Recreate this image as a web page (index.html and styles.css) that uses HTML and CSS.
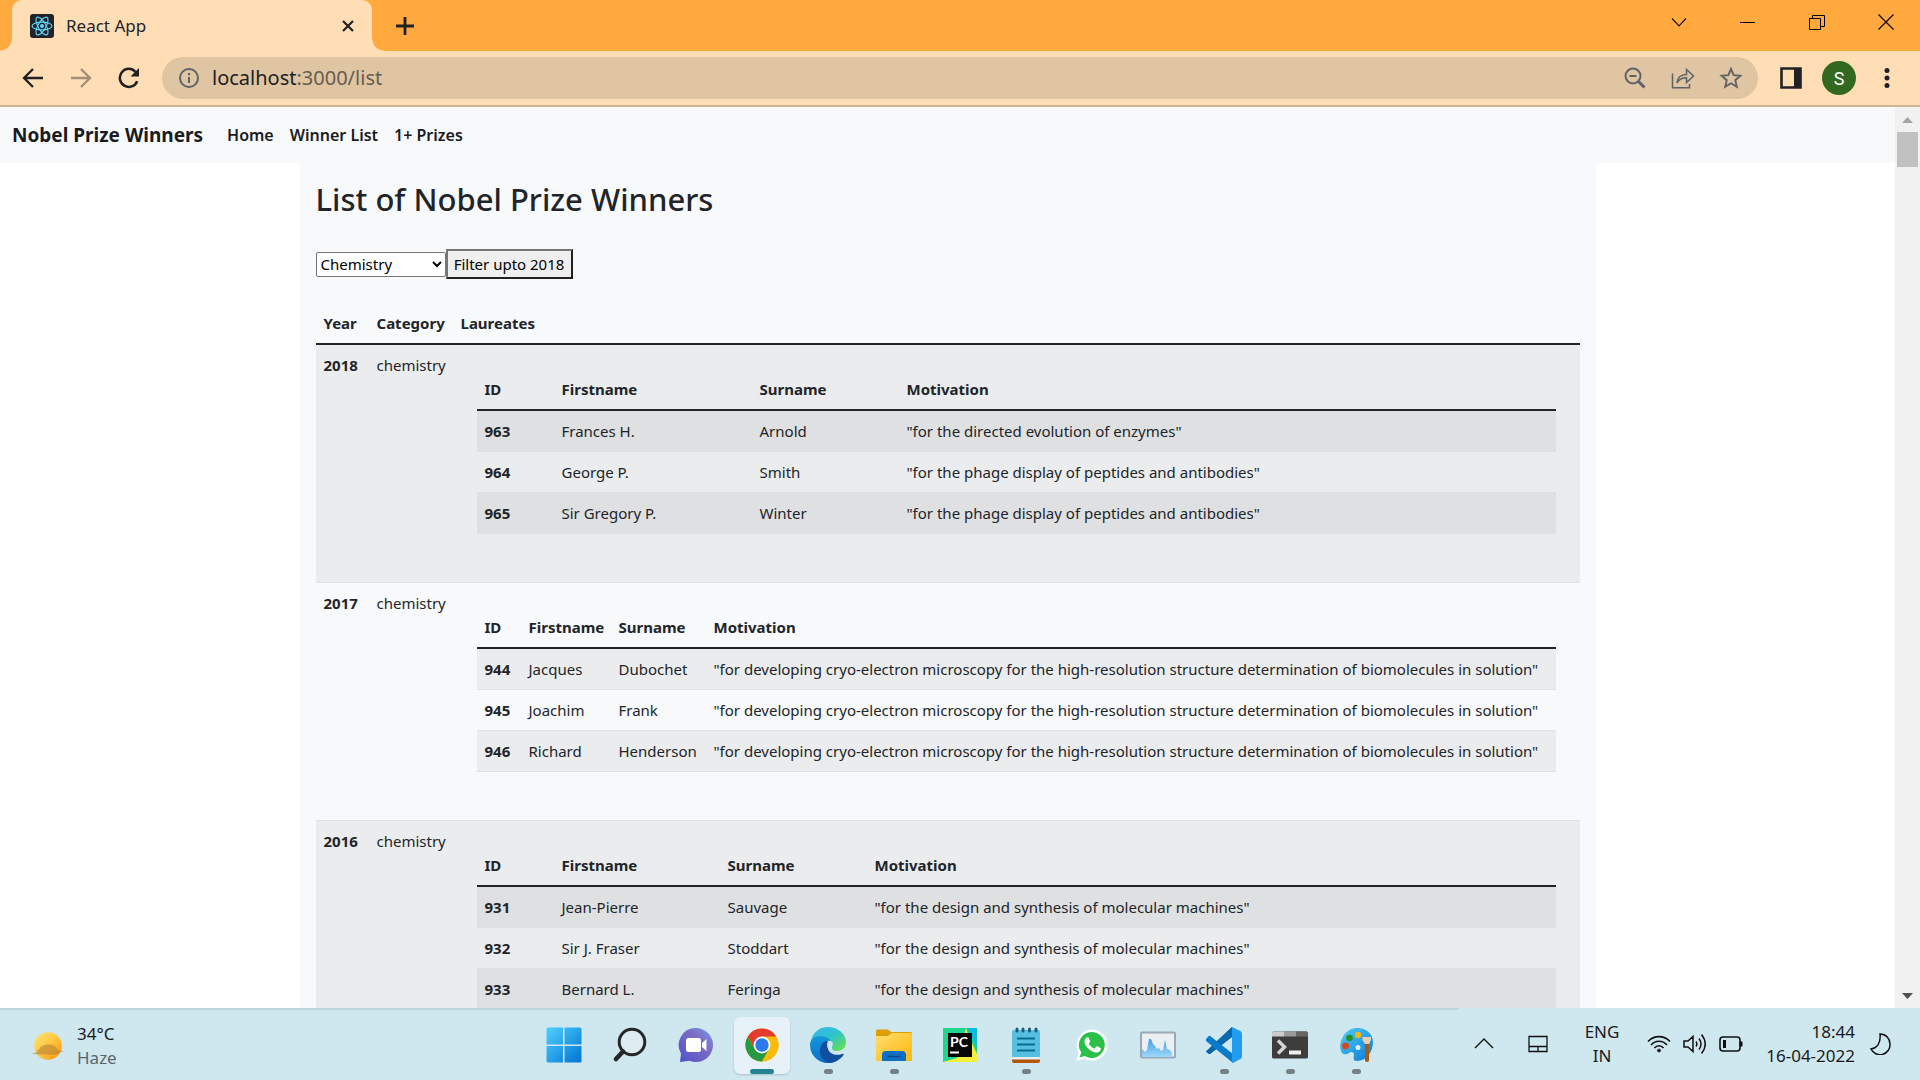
FILE: index.html
```html
<!DOCTYPE html>
<html lang="en">
<head>
<meta charset="utf-8">
<title>React App</title>
<link rel="stylesheet" href="styles.css">
</head>
<body>
<header class="browser">
  <div class="tabstrip">
    <div class="tab">
      <svg class="favicon" width="24" height="24" viewBox="0 0 24 24"><rect width="24" height="24" rx="3" fill="#20232a"/><g fill="none" stroke="#61dafb" stroke-width="1.1"><ellipse cx="12" cy="12" rx="10" ry="3.9"/><ellipse cx="12" cy="12" rx="10" ry="3.9" transform="rotate(60 12 12)"/><ellipse cx="12" cy="12" rx="10" ry="3.9" transform="rotate(120 12 12)"/></g><circle cx="12" cy="12" r="2" fill="#61dafb"/></svg>
      <span class="tab-title">React App</span>
      <button class="icon-button" aria-label="Close tab"><svg width="14" height="14" viewBox="0 0 14 14"><path d="M2 2l10 10M12 2L2 12" stroke="#202124" stroke-width="2.2"/></svg></button>
    </div>
    <button class="icon-button new-tab" aria-label="New tab"><svg width="18" height="18" viewBox="0 0 18 18"><path d="M9 0v18M0 9h18" stroke="#202124" stroke-width="2.8"/></svg></button>
    <div class="window-controls">
      <button class="icon-button" aria-label="Search tabs"><svg width="16" height="16" viewBox="0 0 16 16"><path d="M1 4.500l7 7.500 7-7.500" fill="none" stroke="#111" stroke-width="1.1"/></svg></button>
      <button class="icon-button" aria-label="Minimize"><svg width="16" height="16" viewBox="0 0 16 16"><path d="M0 8.500h15" stroke="#000"/></svg></button>
      <button class="icon-button" aria-label="Restore"><svg width="16" height="16" viewBox="0 0 16 16"><path d="M.5 4.500h11v11h-11zM3.500 4.500v-3h12v11h-4" fill="none" stroke="#000"/></svg></button>
      <button class="icon-button" aria-label="Close window"><svg width="16" height="16" viewBox="0 0 16 16"><path d="M.5 .5l15 15M15.500 .5l-15 15" stroke="#000" stroke-width="1.1"/></svg></button>
    </div>
  </div>
  <div class="toolbar">
    <div class="history">
      <button class="icon-button" aria-label="Back"><svg width="22" height="22" viewBox="0 0 22 22"><path d="M21 11H2.500M11 2l-9 9 9 9" fill="none" stroke="#202124" stroke-width="2.300"/></svg></button>
      <button class="icon-button" aria-label="Forward"><svg width="22" height="22" viewBox="0 0 22 22"><path d="M1 11h18.500M11 2l9 9-9 9" fill="none" stroke="#a38f76" stroke-width="2.300"/></svg></button>
      <button class="icon-button" aria-label="Reload"><svg width="22" height="22" viewBox="0 0 22 22"><path d="M19.200 14.200A9 9 0 1 1 17.500 4.800" fill="none" stroke="#202124" stroke-width="2.500"/><path d="M21 1v8.500h-8.500z" fill="#202124"/></svg></button>
    </div>
    <div class="omnibox">
      <svg width="22" height="22" viewBox="0 0 22 22"><circle cx="11" cy="11" r="9" fill="none" stroke="#5f6368" stroke-width="2"/><path d="M11 10v6M11 6v2.300" stroke="#5f6368" stroke-width="2"/></svg>
      <span class="url">localhost<span class="url-path">:3000/list</span></span>
      <svg width="24" height="24" viewBox="0 0 24 24" fill="none" stroke="#5f6368" stroke-width="2"><circle cx="10" cy="10" r="7.500"/><path d="M6.500 10h7"/><path d="M15.500 15.500l6 6" stroke-width="3"/></svg>
      <svg width="24" height="24" viewBox="0 0 24 24" fill="none" stroke="#5f6368" stroke-width="1.500"><path d="M1.500 7.500v14.300h17V18"/><path d="M6 17c.5-6 4-8.500 9.500-8.600V3.500l7 6.500-7 6.500v-4.700c-4.500 0-7.500 1.500-9.500 5.200z"/></svg>
      <svg width="24" height="24" viewBox="0 0 24 24"><path d="M12 3l2.700 6.200 6.700.6-5.100 4.400 1.500 6.600L12 17.300l-5.800 3.500 1.500-6.600-5.100-4.400 6.700-.6z" fill="none" stroke="#5f6368" stroke-width="1.900"/></svg>
    </div>
    <div class="actions">
      <button class="icon-button" aria-label="Side panel"><svg width="22" height="22" viewBox="0 0 22 22"><path d="M1.500 1.500h19v19h-19z" fill="none" stroke="#202124" stroke-width="2.600"/><path d="M14 1h7v20h-7z" fill="#202124"/></svg></button>
      <button class="avatar" aria-label="Profile">S</button>
      <button class="icon-button" aria-label="Menu"><svg width="22" height="22" viewBox="0 0 22 22" fill="#202124"><circle cx="11" cy="3.500" r="2.500"/><circle cx="11" cy="11" r="2.500"/><circle cx="11" cy="18.500" r="2.500"/></svg></button>
    </div>
  </div>
</header>

<div class="viewport">
  <div class="page">
    <nav class="navbar">
      <a class="brand" href="#">Nobel Prize Winners</a>
      <a class="nav-link" href="#">Home</a>
      <a class="nav-link" href="#">Winner List</a>
      <a class="nav-link" href="#">1+ Prizes</a>
    </nav>
    <main class="container">
      <h1>List of Nobel Prize Winners</h1>
      <form class="filters">
        <select aria-label="Category"><option>Chemistry</option></select>
        <button class="filter-button" type="button">Filter upto 2018</button>
      </form>
      <table class="table winners">
        <colgroup><col class="col-year"><col class="col-category"><col></colgroup>
        <thead><tr><th>Year</th><th>Category</th><th>Laureates</th></tr></thead>
        <tbody>
          <tr><th>2018</th><td>chemistry</td><td>
            <table class="table laureates">
              <colgroup><col class="col-id-wide"><col class="col-first-2018"><col class="col-surname"><col></colgroup>
              <thead><tr><th>ID</th><th>Firstname</th><th>Surname</th><th>Motivation</th></tr></thead>
              <tbody>
                <tr><th>963</th><td>Frances H.</td><td>Arnold</td><td>"for the directed evolution of enzymes"</td></tr>
                <tr><th>964</th><td>George P.</td><td>Smith</td><td>"for the phage display of peptides and antibodies"</td></tr>
                <tr><th>965</th><td>Sir Gregory P.</td><td>Winter</td><td>"for the phage display of peptides and antibodies"</td></tr>
              </tbody>
            </table></td></tr>
          <tr><th>2017</th><td>chemistry</td><td>
            <table class="table laureates">
              <colgroup><col class="col-id"><col class="col-first-2017"><col class="col-surname-2017"><col></colgroup>
              <thead><tr><th>ID</th><th>Firstname</th><th>Surname</th><th>Motivation</th></tr></thead>
              <tbody>
                <tr><th>944</th><td>Jacques</td><td>Dubochet</td><td>"for developing cryo-electron microscopy for the high-resolution structure determination of biomolecules in solution"</td></tr>
                <tr><th>945</th><td>Joachim</td><td>Frank</td><td>"for developing cryo-electron microscopy for the high-resolution structure determination of biomolecules in solution"</td></tr>
                <tr><th>946</th><td>Richard</td><td>Henderson</td><td>"for developing cryo-electron microscopy for the high-resolution structure determination of biomolecules in solution"</td></tr>
              </tbody>
            </table></td></tr>
          <tr><th>2016</th><td>chemistry</td><td>
            <table class="table laureates">
              <colgroup><col class="col-id-wide"><col class="col-first-2016"><col class="col-surname"><col></colgroup>
              <thead><tr><th>ID</th><th>Firstname</th><th>Surname</th><th>Motivation</th></tr></thead>
              <tbody>
                <tr><th>931</th><td>Jean-Pierre</td><td>Sauvage</td><td>"for the design and synthesis of molecular machines"</td></tr>
                <tr><th>932</th><td>Sir J. Fraser</td><td>Stoddart</td><td>"for the design and synthesis of molecular machines"</td></tr>
                <tr><th>933</th><td>Bernard L.</td><td>Feringa</td><td>"for the design and synthesis of molecular machines"</td></tr>
              </tbody>
            </table></td></tr>
        </tbody>
      </table>
    </main>
  </div>
  <div class="scrollbar">
    <svg width="25" height="25" viewBox="0 0 25 25"><path d="M7 16l5.500-6 5.500 6z" fill="#a3a3a3"/></svg>
    <div class="thumb"></div>
    <svg class="scroll-down" width="25" height="25" viewBox="0 0 25 25"><path d="M7 10l5.500 6 5.500-6z" fill="#505050"/></svg>
  </div>
</div>

<footer class="taskbar">
  <div class="weather">
    <svg width="32" height="32" viewBox="0 0 32 32"><defs><linearGradient id="sun" x1="0" y1="0" x2="1" y2="1"><stop offset="0" stop-color="#ffe36e"/><stop offset=".45" stop-color="#ffcb46"/><stop offset="1" stop-color="#ff8f00"/></linearGradient></defs><circle cx="16" cy="16" r="13.800" fill="url(#sun)"/><path d="M0 24c2-1.600 4-1.300 5.500-2.300C4 21 5 20 7 19.500c1-3 5-5 9-5 6 0 9 2.500 10 5.500l6 1.200-5 1.200 1 1-6 1.600z" fill="#bd8738" opacity=".65"/></svg>
    <div class="stack"><span>34°C</span><span class="muted">Haze</span></div>
  </div>
  <div class="apps">
    <button class="app" aria-label="Start"><svg width="36" height="36" viewBox="0 0 36 36"><defs><linearGradient id="win" x1="0" y1="0" x2="1" y2="1" ><stop offset="0" stop-color="#50d0ff"/><stop offset="1" stop-color="#0073d2"/></linearGradient></defs><path d="M2 .5h15v17H.5V2Q.5 .5 2 .5zM18.500 .5H34q1.500 0 1.500 1.500v15.500h-17zM.5 19H17v16.500H2q-1.500 0-1.500-1.500zM18.500 19h17v15q0 1.500-1.500 1.500H18.500z" fill="url(#win)"/></svg></button>
    <button class="app" aria-label="Search"><svg width="36" height="36" viewBox="0 0 36 36" fill="none" stroke="#272727"><circle cx="20" cy="15" r="12.800" stroke-width="3" fill="#dcecf1"/><path d="M11 24.500l-7 7.500" stroke-width="4.600" stroke-linecap="round"/></svg></button>
    <button class="app" aria-label="Chat"><svg width="36" height="36" viewBox="0 0 36 36"><defs><linearGradient id="chat" x1="1" y1="0" x2="0" y2="1"><stop offset="0" stop-color="#6b9cf5"/><stop offset=".35" stop-color="#7f6fc5"/><stop offset="1" stop-color="#4f51c8"/></linearGradient></defs><path d="M18 1a17 17 0 1 1-6.500 32.700L2 35l1-8.500A17 17 0 0 1 18 1z" fill="url(#chat)"/><rect x="8" y="11" width="15" height="14" rx="2.500" fill="#fff"/><path d="M24 16l4.500-4v12L24 20z" fill="#fff"/></svg></button>
    <button class="app active" aria-label="Chrome"><svg width="36" height="36" viewBox="0 0 36 36"><circle cx="18" cy="18" r="16.500" fill="#fbbc09"/><path d="M3.700 9.700a16.500 16.500 0 0 1 28.600 0H18L10.800 22z" fill="#e33b2e"/><path d="M3.700 9.700a16.500 16.500 0 0 0 14.300 24.800l7.200-12.300H10.800z" fill="#249a41"/><path d="M18 9.700h14.300A16.500 16.500 0 0 1 18 34.500l7.200-12.300z" fill="#fbbc09"/><circle cx="18" cy="18" r="8.400" fill="#fff"/><circle cx="18" cy="18" r="6.700" fill="#2b79ed"/></svg></button>
    <button class="app open" aria-label="Edge"><svg width="36" height="36" viewBox="0 0 36 36"><defs><linearGradient id="edgeTop" x1="0" y1="0" x2="1" y2="1"><stop offset="0" stop-color="#35b5ee"/><stop offset=".5" stop-color="#2fc4c9"/><stop offset="1" stop-color="#70e33f"/></linearGradient><linearGradient id="edgeLow" x1="0" y1="0" x2="0" y2="1"><stop offset="0" stop-color="#1597dd"/><stop offset="1" stop-color="#0870c8"/></linearGradient></defs><path d="M1 15C2 6 9 0 18 0c10 0 18 7 18 15 0 6-4 9-9 9-4 0-6-2-5-4 2-4 0-7-5-7z" fill="url(#edgeTop)"/><path d="M0 18c0-6 5-9 10-9 7 0 12 4 12 8-3-3-7 0-7 4 0 7 8 13 13 12A18 18 0 0 1 0 18z" fill="url(#edgeLow)"/><path d="M16 14c-3 1-6 4-6 10 0 7 5 11 9 12 6 0 12-4 14.500-8 .5-1-.3-1.500-1.500-1-8 3-17-2-14-12z" fill="#104f9f"/><path d="M18 14c3-1.300 5.500 1 4 5-.8 1.500-1 3 1 4.300-5-.3-7-5-5-9.300z" fill="#cfe7ee"/></svg></button>
    <button class="app open" aria-label="File Explorer"><svg width="36" height="36" viewBox="0 0 36 36"><defs><linearGradient id="folder" x1="0" y1="0" x2="1" y2="1"><stop offset="0" stop-color="#ffdc70"/><stop offset="1" stop-color="#fdb90a"/></linearGradient></defs><path d="M0 4q0-1.500 1.500-1.500H12L15 5h19.500Q36 5 36 6.500V16H0z" fill="#dc9d07"/><path d="M0 9h12l4-3h18.500Q36 6 36 7.500V34H0z" fill="url(#folder)"/><path d="M6 34v-6q0-4 4-4h16q4 0 4 4v6z" fill="#0d6fc4"/><path d="M11.500 29.500h13" stroke="#084a8d" stroke-width="1.500"/></svg></button>
    <button class="app" aria-label="PyCharm"><svg width="34" height="34" viewBox="0 0 34 34"><path d="M0 0h34v34H0z" fill="#20d68d"/><path d="M24 0h10v20z" fill="#09bce0"/><path d="M23 0l3 9 8 17v8H0l14-4z" fill="#f4f03e"/><path d="M5 5h24v24H5z" fill="#080808"/><path d="M7 24.500h9" stroke="#fff" stroke-width="2"/><text class="pycharm-text" x="7" y="19">PC</text></svg></button>
    <button class="app open" aria-label="Notepad"><svg width="36" height="36" viewBox="0 0 36 36"><path d="M4 28h28v6q0 2-2 2H6q-2 0-2-2z" fill="#b4570c"/><path d="M4 28h28v4.500H4z" fill="#e8edf0"/><path d="M6 3h24q2 0 2 2v25H4V5q0-2 2-2z" fill="#56bfe0"/><path d="M9 11.500h18M9 17.500h18M9 23.500h18" stroke="#086c91" stroke-width="2"/><path d="M9 2v2M15 2v2M21.500 2v2M28 2v2" stroke="#17607c" stroke-width="3" stroke-linecap="round"/></svg></button>
    <button class="app" aria-label="WhatsApp"><svg width="36" height="36" viewBox="0 0 36 36"><path d="M18 2.500a15.500 15.500 0 1 1-7.600 29L2.200 34l2.500-8A15.700 15.700 0 0 1 18 2.500z" fill="#fff"/><path d="M18 5a13 13 0 1 1-7.200 24L5.500 30.500l1.800-5A13 13 0 0 1 18 5z" fill="#2bc048"/><path d="M12 11c1-1 2.300-1 2.800 0l1.300 3c.4 1-.9 1.700-1.300 2.500 1.300 2.500 3 4 5.600 5.200l1.800-2c.5-.5.900-.4 1.500-.1l2.800 1.400c.8.4.3 2.500-.8 3.500-2 1.700-4.500 1.300-7.700-.2-3.500-1.700-6.200-5-7.200-7.700-.8-2.300-.1-4.300 1.200-5.600z" fill="#fff"/></svg></button>
    <button class="app" aria-label="Resource Monitor"><svg width="36" height="36" viewBox="0 0 36 36"><defs><linearGradient id="graph" x1="0" y1="0" x2="0" y2="1"><stop offset="0" stop-color="#449de2"/><stop offset="1" stop-color="#9dd9fb"/></linearGradient></defs><rect x="1" y="5.500" width="34" height="25" rx="1" fill="#eceff2" stroke="#9ba8b5" stroke-width="2"/><path d="M2 22l3 3 2-2 2-11h2l2 5 2 2 2 3 2-1 2 3 2-1 2-10 2 9 3 1 2 3v4H2z" fill="url(#graph)"/></svg></button>
    <button class="app open" aria-label="Visual Studio Code"><svg width="36" height="36" viewBox="0 0 36 36"><path d="M0 24.500l2.500 2.300q1 .5 2 0L26 10V0z" fill="#075f9f"/><path d="M26 0L0 24.500l3 2.500L27 9z" fill="#0869ad"/><path d="M0 12l2.500-2.800q1-.7 2 0L27 27v9L0 14z" fill="#087ccb"/><path d="M26 0l8.500 4Q36 5 36 6.500v23q0 1.500-1.500 2.500L27 36l-1-1z" fill="#239df0"/></svg></button>
    <button class="app open" aria-label="Terminal"><svg width="36" height="36" viewBox="0 0 36 36"><rect y="4.500" width="36" height="27" rx="1.500" fill="#3c3c3c"/><path d="M0 9.500V6q0-1.500 1.500-1.500H12v5z" fill="#ccc"/><path d="M12 4.500h12v5H12z" fill="#999"/><path d="M24 4.500h10.500Q36 4.500 36 6v3.500H24z" fill="#666"/><path d="M6 13.500l6.500 6.500L6 26.500" fill="none" stroke="#d4d4d4" stroke-width="3.500"/><path d="M17 23.500h12v4H17z" fill="#eee"/></svg></button>
    <button class="app open" aria-label="Paint"><svg width="36" height="36" viewBox="0 0 36 36"><defs><linearGradient id="paint" x1="0" y1="0" x2="1" y2="1"><stop offset="0" stop-color="#4fd0f6"/><stop offset="1" stop-color="#0a78d8"/></linearGradient></defs><path d="M19 1c9 0 16 6 16 14 0 10-7 19-16 19-5 0-3-4-3-6 0-3-3-4-5-2-2 1.500-5 2-7 0C-1 19 5 1 19 1z" fill="url(#paint)"/><circle cx="7.500" cy="19" r="3.400" fill="#d54a18"/><circle cx="11.500" cy="11" r="3.300" fill="#278f25"/><circle cx="20" cy="8" r="3.200" fill="#f5b819"/><circle cx="20" cy="20.500" r="2.500" fill="#d9edfb"/><path d="M27 16h4v18q-2 2-4 0z" fill="#a65a18"/><path d="M24.500 10H33v3l-2 4h-4l-2.500-4z" fill="#e8ceb5"/></svg></button>
  </div>
  <div class="tray">
    <svg width="20" height="20" viewBox="0 0 20 20"><path d="M1 14l9-9 9 9" fill="none" stroke="#111" stroke-width="1.400"/></svg>
    <svg class="touchpad" width="20" height="18" viewBox="0 0 20 18"><path d="M1 1.500h18v15H1zM1 11.500h18M10 11.500v5" fill="none" stroke="#111" stroke-width="1.300"/></svg>
    <div class="stack language"><span>ENG</span><span>IN</span></div>
    <div class="status">
      <svg width="24" height="24" viewBox="0 0 24 24" fill="none" stroke="#111" stroke-width="1.700"><path d="M1 9.500c6-6.500 16-6.500 22 0M4 13c4.500-5 11.500-5 16 0M7.500 16c2.500-3 6.500-3 9 0"/><circle cx="12" cy="18.500" r="1.600" fill="#111" stroke-width=".5"/></svg>
      <svg width="24" height="24" viewBox="0 0 24 24" fill="none" stroke="#111" stroke-width="1.500"><path d="M1 9h4l5-4.500v15L5 15H1zM13 9.500q1.700 2.500 0 5M16 6.500q4 5.500 0 11M18.500 2.500q7.500 9.500 0 19"/></svg>
      <svg width="24" height="24" viewBox="0 0 24 24" fill="none" stroke="#111" stroke-width="1.600"><rect x="1" y="5" width="20" height="14" rx="3"/><path d="M22 9.500v5" stroke-width="3"/><path d="M5.500 8v8" stroke-width="3"/></svg>
    </div>
    <div class="stack clock"><span>18:44</span><span>16-04-2022</span></div>
    <svg class="moon" width="22" height="22" viewBox="0 0 22 22"><path d="M11 1c6 0 10 4.500 10 10a10 10 0 0 1-19 5c6-1 10-6 9-15z" fill="none" stroke="#111" stroke-width="1.500"/></svg>
  </div>
</footer>
</body>
</html>
```

FILE: styles.css
```css
* { box-sizing: border-box; }
body {
  margin: 0;
  height: 100vh;
  display: flex;
  flex-direction: column;
  overflow: hidden;
  font-family: "Segoe UI", "Noto Sans", "Open Sans", sans-serif;
  font-size: 15px;
  line-height: 24px;
  color: #212529;
}
svg { display: block; flex: none; }
button { font: inherit; color: inherit; }
.icon-button { border: 0; padding: 0; background: none; display: flex; flex: none; }

.tabstrip {
  height: 51px;
  display: flex;
  align-items: center;
  padding-left: 12px;
  background: #ffa93f;
}
.tab {
  position: relative;
  width: 360px;
  height: 51px;
  padding: 0 17px 0 18px;
  display: flex;
  align-items: center;
  gap: 12px;
  background: #ffdeb6;
  border-radius: 10px 10px 0 0;
  font-size: 17px;
}
.tab::before, .tab::after {
  content: "";
  position: absolute;
  bottom: 0;
  width: 12px;
  height: 12px;
}
.tab::before { right: 100%; background: radial-gradient(circle at 0 0, transparent 11px, #ffdeb6 12px); }
.tab::after { left: 100%; background: radial-gradient(circle at 100% 0, transparent 11px, #ffdeb6 12px); }
.tab-title { flex: 1; }
.new-tab { margin-left: 24px; }
.window-controls {
  margin-left: auto;
  padding: 0 26px 8px 0;
  display: flex;
  gap: 53px;
}

.toolbar {
  display: flex;
  align-items: center;
  height: 56px;
  padding: 0 22px;
  background: #ffdeb6;
  border-bottom: 2px solid #cfb594;
}
.history { display: flex; gap: 26px; margin-right: 22px; }
.omnibox {
  flex: 1;
  height: 42px;
  border-radius: 21px;
  padding: 0 15px 0 16px;
  display: flex;
  align-items: center;
  gap: 24px;
  background: #dfc5a1;
}
.url { flex: 1; margin-left: -12px; font-size: 20px; color: #202124; }
.url-path { color: #665d52; }
.actions { display: flex; align-items: center; gap: 20px; margin-left: 22px; }
.avatar {
  width: 34px;
  height: 34px;
  border: 0;
  border-radius: 50%;
  padding: 0;
  background: #33691e;
  color: #fff;
  font: 18px Roboto, sans-serif;
}

.viewport { flex: 1; min-height: 0; display: flex; }
.page { flex: 1; overflow: hidden; background: #fff; }
.scrollbar {
  width: 25px;
  display: flex;
  flex-direction: column;
  background: #f1f1f1;
}
.thumb { height: 35px; margin: 0 2px; background: #c1c1c1; }
.scroll-down { margin-top: auto; }

.navbar {
  height: 56px;
  padding: 0 12px;
  display: flex;
  align-items: center;
  gap: 16px;
  background: #f8f9fb;
  font-size: 16px;
  font-weight: 600;
}
.navbar a { color: #191b1e; text-decoration: none; }
.brand { margin-right: 8px; font-size: 19px; font-weight: 700; }

.container {
  max-width: 1296px;
  margin: 0 auto;
  padding: 16px;
  background: #f8f9fb;
}
h1 {
  margin: 0 0 30px;
  font-size: 31px;
  line-height: 40px;
  font-weight: 500;
}
.filters { display: flex; align-items: center; margin: 0 0 24px; }
select {
  width: 130px;
  height: 25px;
  font: inherit;
  background: #fff;
  border: 1px solid #767676;
  border-radius: 2px;
  color: #000;
}
.filter-button {
  width: 127px;
  height: 30px;
  padding: 0;
  line-height: 24px;
  white-space: nowrap;
  background: #efefef;
  color: #000;
  border: 2px solid;
  border-color: #767676 #212121 #212121 #767676;
}

.table {
  width: 100%;
  table-layout: fixed;
  border-spacing: 0;
}
.table th, .table td {
  padding: 8px;
  text-align: left;
  vertical-align: top;
  white-space: nowrap;
  border-bottom: 1px solid #dee2e6;
}
.table th { font-weight: 700; }
.table thead th { padding-bottom: 8px; border-bottom: 2px solid #212529; }
.winners > tbody > tr > td:last-child { padding: 24px 24px 48px; }
.table > tbody > tr:nth-child(odd) { background: rgba(0, 0, 0, .05); }
.col-year { width: 53px; }
.col-category { width: 84px; }
.col-id { width: 44px; }
.col-id-wide { width: 77px; }
.col-first-2018 { width: 198px; }
.col-first-2017 { width: 90px; }
.col-first-2016 { width: 166px; }
.col-surname { width: 147px; }
.col-surname-2017 { width: 95px; }

.taskbar {
  position: relative;
  height: 72px;
  display: grid;
  grid-template-columns: 1fr auto 1fr;
  align-items: center;
  background: #cfe7ee;
  color: #1b1b1b;
  font-size: 17px;
}
.taskbar::before {
  content: "";
  position: absolute;
  top: 0;
  left: 0;
  width: 76%;
  height: 2px;
  background: #bfd5de;
}
.stack { display: flex; flex-direction: column; }
.weather { display: flex; align-items: center; gap: 13px; padding: 4px 0 0 32px; }
.muted { color: #59676c; }
.apps { display: flex; }
.app {
  position: relative;
  width: 56px;
  height: 57px;
  margin: 2px 5px 0;
  padding: 0;
  border: 0;
  border-radius: 6px;
  background: none;
  display: flex;
  align-items: center;
  justify-content: center;
}
.app.active { background: #e7f2f8; box-shadow: 0 1px 2px #a9c3cc; }
.app.open::after, .app.active::after {
  content: "";
  position: absolute;
  bottom: 0;
  left: 24px;
  width: 9px;
  height: 5px;
  border-radius: 3px;
  background: #748083;
}
.app.active::after { left: 16px; width: 24px; background: #258292; }
.pycharm-text { font: 700 14px Lato, sans-serif; fill: #fff; }
.tray {
  justify-self: end;
  display: flex;
  align-items: center;
  padding-right: 29px;
}
.touchpad { margin: 0 36px 0 34px; }
.language { width: 36px; align-items: center; }
.status { display: flex; gap: 12px; margin: 0 20px 0 27px; }
.clock { width: 92px; align-items: flex-end; }
.moon { margin-left: 14px; }
```
